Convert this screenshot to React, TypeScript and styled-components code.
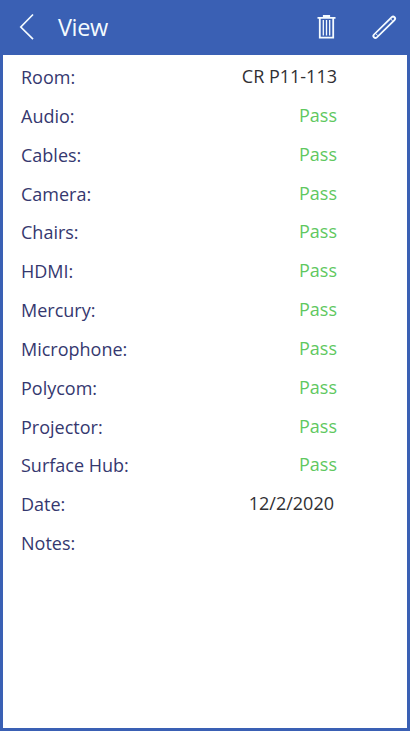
import React from 'react';
import styled, { createGlobalStyle } from 'styled-components';

const GlobalStyle = createGlobalStyle`
  * { box-sizing: border-box; }
  body { margin: 0; }
`;

const Screen = styled.div`
  width: 410px;
  height: 731px;
  display: flex;
  flex-direction: column;
  background: #fff;
  border: 3px solid #3a60b4;
  border-top: 0;
  font-family: 'Open Sans', 'Noto Sans', sans-serif;
  font-weight: 400;
`;

const Header = styled.header`
  flex: none;
  height: 55px;
  display: flex;
  align-items: center;
  background: #3a60b4;
  color: #f4fbff;
  padding: 0 10px 1px 14px;
`;

const Title = styled.h1`
  flex: 1;
  margin: 0 0 0 20px;
  font-size: 23.5px;
  line-height: 32px;
  font-weight: 400;
  letter-spacing: -0.4px;
`;

const IconButton = styled.button`
  display: flex;
  padding: 0;
  border: 0;
  background: none;
  color: inherit;
  & + & { margin-left: 34px; }
`;

const Details = styled.dl`
  margin: 0;
  padding: 2.7px 70px 0 18px;
`;

const Row = styled.div`
  display: flex;
  justify-content: space-between;
  height: 38.83px;
  align-items: center;
  font-size: 18px;
  line-height: 26px;
`;

const Label = styled.dt`
  color: #35386f;
`;

const Value = styled.dd<{ $pass?: boolean; $inset?: number }>`
  margin: -2px ${({ $inset = 0 }) => $inset}px 0 0;
  color: ${({ $pass }) => ($pass ? '#5fc85f' : '#303033')};
`;

const checks = ['Audio', 'Cables', 'Camera', 'Chairs', 'HDMI', 'Mercury', 'Microphone', 'Polycom', 'Projector', 'Surface Hub'];

export default function App() {
  return (
    <Screen>
      <GlobalStyle />
      <Header>
        <IconButton aria-label="Back">
          <svg width="21" height="30" viewBox="0 0 21 30" fill="none" stroke="currentColor" strokeWidth="1.7">
            <path d="M16 2.5 3.8 15 16 27.2" />
          </svg>
        </IconButton>
        <Title>View</Title>
        <IconButton aria-label="Delete">
          <svg width="20" height="26" viewBox="0 0 20 26" fill="none" stroke="currentColor">
            <path strokeWidth="1.8" d="M.5 3.8H18.5M6.8 3.5V2H12.2V3.5M2.8 4V23.6H16.2V4" />
            <path strokeWidth="1.3" d="M6.3 6V21.5M9.5 6V21.5M12.7 6V21.5" />
          </svg>
        </IconButton>
        <IconButton aria-label="Edit">
          <svg width="26" height="26" viewBox="0 0 26 26" fill="none" strokeLinecap="round">
            <path stroke="currentColor" strokeWidth="5.8" d="M4.4 22 22.1 4.6" />
            <path stroke="#3a60b4" strokeWidth="2.3" d="M4.5 21.9 22 4.7" />
            <path stroke="currentColor" strokeWidth="1" d="M5 19.8 6.6 21.4M19.9 5.2 21.5 6.8" />
          </svg>
        </IconButton>
      </Header>
      <Details>
        <Row>
          <Label>Room:</Label>
          <Value>CR P11-113</Value>
        </Row>
        {checks.map((name) => (
          <Row key={name}>
            <Label>{name}:</Label>
            <Value $pass>Pass</Value>
          </Row>
        ))}
        <Row>
          <Label>Date:</Label>
          <Value $inset={3}>12/2/2020</Value>
        </Row>
        <Row>
          <Label>Notes:</Label>
        </Row>
      </Details>
    </Screen>
  );
}
